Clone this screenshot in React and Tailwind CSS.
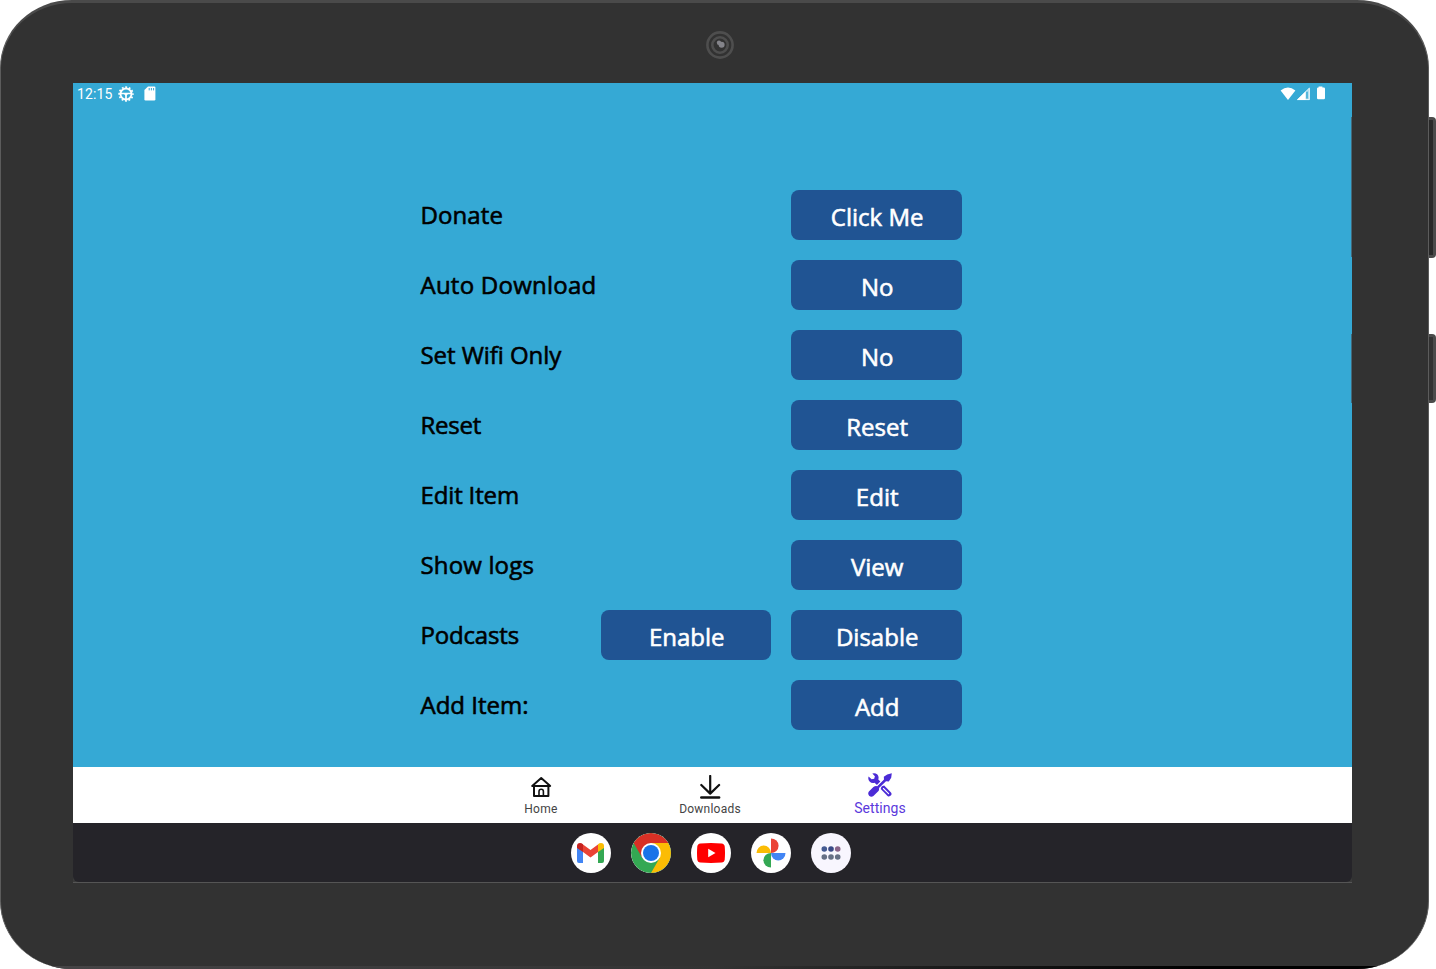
import React from "react";

const rows = [
  { label: "Donate", spacing: "tracking-[0.1px]", actions: ["Click Me"] },
  { label: "Auto Download", spacing: "tracking-[0.24px]", actions: ["No"] },
  { label: "Set Wifi Only", spacing: "tracking-[-0.06px]", actions: ["No"] },
  { label: "Reset", spacing: "tracking-[-0.25px]", actions: ["Reset"] },
  { label: "Edit Item", spacing: "tracking-[-0.15px]", actions: ["Edit"] },
  { label: "Show logs", spacing: "tracking-[0.15px]", actions: ["View"] },
  { label: "Podcasts", spacing: "tracking-[-0.17px]", actions: ["Enable", "Disable"] },
  { label: "Add Item:", spacing: "tracking-normal", actions: ["Add"] },
];

function Camera() {
  return (
    <svg className="h-7 w-7" viewBox="0 0 28 28" fill="none">
      <circle cx="14" cy="14" r="12.6" stroke="#4e4e4e" strokeWidth="2.6" />
      <circle cx="14" cy="14" r="7.7" stroke="#4e4e4e" strokeWidth="2.6" />
      <circle cx="13" cy="11.8" r="2.2" fill="#84848a" />
      <circle cx="15.6" cy="13.7" r="3" fill="#84848a" />
    </svg>
  );
}

function GearIcon() {
  return (
    <svg className="h-4 w-4" viewBox="0 0 16 16" fill="none" stroke="white">
      <circle cx="8" cy="8" r="5.5" strokeWidth="1.9" />
      <circle cx="8" cy="8" r="6.9" strokeWidth="1.6" strokeDasharray="1.9 1.713" strokeDashoffset="0.95" />
      <path d="M2.8 7.6H13.2" strokeWidth="1.5" />
      <path d="M8 7.6V13.5" strokeWidth="1.7" />
      <path d="M5.8 7.6H10.2L8.8 9.6H7.2Z" fill="white" stroke="none" />
    </svg>
  );
}

function SdIcon() {
  return (
    <svg className="h-[15px] w-3" viewBox="0 0 12 15">
      <path d="M4 0.4H10.2Q11.4 0.4 11.4 1.6V13.2Q11.4 14.4 10.2 14.4H1.6Q0.4 14.4 0.4 13.2V4Z" fill="white" />
      <path d="M5.2 2V4.4M7.4 2V4.4M9.6 2V4.4" stroke="#35a9d5" strokeWidth="1" />
    </svg>
  );
}

function StatusIcons() {
  return (
    <svg className="h-4 w-[46px]" viewBox="0 0 46 16">
      <path d="M0.6 4.5Q8 -1.5 15.4 4.5L8 14Z" fill="white" />
      <path d="M29.8 1.5V14H17Z" fill="white" fillOpacity="0.55" />
      <path d="M25.6 5.6V14H17Z" fill="white" />
      <path d="M17.6 13.6L29.3 2.2V13.6Z" fill="none" stroke="white" strokeWidth="0.8" />
      <path d="M27 5.8V12.5" stroke="#35a9d5" strokeWidth="1.4" />
      <path d="M38.6 0.6H42.4V1.6H43.8Q45 1.6 45 2.8V12Q45 13.2 43.8 13.2H38.2Q37 13.2 37 12V2.8Q37 1.6 38.2 1.6H38.6Z" fill="white" />
    </svg>
  );
}

function HomeIcon() {
  return (
    <svg className="h-6 w-6" viewBox="0 0 24 24" fill="none" stroke="#111" strokeWidth="2" strokeLinejoin="round" strokeLinecap="round">
      <path d="M3.2 10.9L12.2 3L21.2 10.9Z" />
      <path d="M5 11V21H19.4V11" />
      <path d="M10 20.4V16.4Q10 14.2 12.2 14.2Q14.4 14.2 14.4 16.4V20.4" strokeWidth="1.6" />
    </svg>
  );
}

function DownloadIcon() {
  return (
    <svg className="h-6 w-6" viewBox="0 0 24 24" fill="none" stroke="#111" strokeWidth="2.2" strokeLinejoin="round" strokeLinecap="round">
      <path d="M12.2 1V18.5M3.3 10L12.2 18.6L21.1 10" />
      <path d="M3.3 22.6H21.1" strokeWidth="2.5" />
    </svg>
  );
}

function ToolsIcon() {
  return (
    <svg className="h-6 w-6" viewBox="0 0 24 24" fill="#4b2bd6">
      <path d="M4.3 0.5Q7 -0.6 9.4 1.6Q11.2 3.6 10.3 6.4L12.4 8.6L9 12L6.6 9.7Q3.6 10.5 1.6 8.4Q-0.4 6.2 0.6 3.4L3.6 6.3L6.2 5.8L6.9 3.2Z" />
      <path d="M13.5 13.2L16.2 12.6L23 19.4Q24.2 21 22.8 22.6Q21.2 24.1 19.5 22.9L12.7 16.1Z" />
      <path d="M15.4 15.5L20.6 20.7" stroke="white" strokeWidth="1.1" strokeLinecap="round" />
      <path d="M19.2 1.4L23.8 0.2L23.2 4.8L20.8 8.4L18 8.2L11 15Q11.5 17.2 10 18.6L5.4 23.1Q3.2 24.6 1.1 22.8Q-0.6 20.7 0.9 18.6L5.4 14.1Q7.2 12.6 9.2 13.2L16 6.4L15.8 3.7Z" />
      <path d="M9.2 12.5L14.6 7.1M12.2 14.9L16.8 10.3" stroke="white" strokeWidth="0.6" />
    </svg>
  );
}

function GmailIcon() {
  return (
    <svg className="h-5 w-[27px]" viewBox="0 0 27 20">
      <path d="M0 4L6 8V20H2Q0 20 0 18Z" fill="#4285f4" />
      <path d="M27 4L21 8V20H25Q27 20 27 18Z" fill="#34a853" />
      <path d="M6 1.6L13.5 7L21 1.6V9L13.5 14.6L6 9Z" fill="#ea4335" />
      <path d="M0 5V3Q0 0 3 0Q4.6 0 6 1.2V9L0 5Z" fill="#c5221f" />
      <path d="M27 5V3Q27 0 24 0Q22.4 0 21 1.2V9L27 5Z" fill="#fbbc04" />
    </svg>
  );
}

function ChromeIcon() {
  return (
    <svg className="h-10 w-10" viewBox="0 0 40 40">
      <circle cx="20" cy="20" r="20" fill="#34a853" />
      <path d="M2.68 10A20 20 0 0 1 37.32 10H20L11.34 25Z" fill="#d93025" />
      <path d="M37.32 10A20 20 0 0 1 20 40L28.66 25L20 10Z" fill="#fbbc04" />
      <circle cx="20" cy="20" r="10" fill="white" />
      <circle cx="20" cy="20" r="8" fill="#1a73e8" />
    </svg>
  );
}

function YoutubeIcon() {
  return (
    <svg className="h-5 w-7" viewBox="0 0 28 20">
      <path d="M3.4 0.5Q14 -0.3 24.6 0.5Q27.4 0.8 27.7 3.6Q28.3 10 27.7 16.4Q27.4 19.2 24.6 19.5Q14 20.3 3.4 19.5Q0.6 19.2 0.3 16.4Q-0.3 10 0.3 3.6Q0.6 0.8 3.4 0.5Z" fill="#ff0000" />
      <path d="M11.2 5.8L18.5 10L11.2 14.2Z" fill="white" />
    </svg>
  );
}

function PhotosIcon() {
  return (
    <svg className="h-[30px] w-[30px]" viewBox="0 0 30 30">
      <path d="M15 0.5A7.6 7.25 0 0 1 15 15Z" fill="#ea4335" />
      <path d="M29.5 15A7.25 7.6 0 0 1 15 15Z" fill="#4285f4" />
      <path d="M15 29.5A7.6 7.25 0 0 1 15 15Z" fill="#34a853" />
      <path d="M0.5 15A7.25 7.6 0 0 1 15 15Z" fill="#fbbc04" />
    </svg>
  );
}

function AppsIcon() {
  return (
    <svg className="h-[14px] w-5" viewBox="0 0 20 14">
      <circle cx="3.3" cy="3" r="2.8" fill="#445a92" />
      <circle cx="10" cy="3" r="2.8" fill="#3a4a86" />
      <circle cx="16.7" cy="3" r="2.8" fill="#8a6489" />
      <circle cx="3.3" cy="11" r="2.8" fill="#667085" />
      <circle cx="10" cy="11" r="2.8" fill="#667085" />
      <circle cx="16.7" cy="11" r="2.8" fill="#667085" />
    </svg>
  );
}

function DockItem({ children, tone = "bg-white" }) {
  return (
    <div className={`flex h-10 w-10 items-center justify-center overflow-hidden rounded-full ${tone}`}>
      {children}
    </div>
  );
}

function SettingRow({ label, spacing, actions }) {
  return (
    <div className="flex h-[50px] items-center justify-between">
      <span className={`pl-[0.5px] text-[24px] leading-[50px] text-black [-webkit-text-stroke:0.6px_black] ${spacing}`}>
        {label}
      </span>
      <div className="flex gap-[20px]">
        {actions.map((a) => (
          <button
            key={a}
            className="h-[50px] w-[170.5px] rounded-[8px] bg-[#205493] pt-1 pl-[1.5px] text-center text-[24px] leading-[46px] text-white [-webkit-text-stroke:0.6px_white]"
          >
            {a}
          </button>
        ))}
      </div>
    </div>
  );
}

export default function App() {
  return (
    <div className="flex h-[969px] w-[1436px] overflow-hidden bg-white">
      <div className="flex h-[969px] w-[1429px] flex-col overflow-hidden rounded-[72px/68px] border-x border-t-[3px] border-x-[#5c5c5c] border-t-[#4a4a4a] bg-[#323232] pl-[72px]">
        <div className="flex h-20 w-[1294px] shrink-0 justify-center pt-7">
          <Camera />
        </div>

        <div className="relative flex h-[800px] w-[1279px] shrink-0 flex-col overflow-hidden border-b border-[#555] bg-[#35a9d5]">
          <div className="flex h-6 shrink-0 items-start justify-between pr-[26px] pl-1">
            <div className="flex items-start font-['Roboto',sans-serif] text-white">
              <span className="w-[41px] pt-[1px] text-[14px] leading-5 tracking-[0.1px]">12:15</span>
              <div className="pt-[3px]">
                <GearIcon />
              </div>
              <div className="pt-[3px] pl-[10px]">
                <SdIcon />
              </div>
            </div>
            <div className="pt-[3px]">
              <StatusIcons />
            </div>
          </div>

          <main className="flex h-[660px] shrink-0 flex-col gap-[20.05px] pt-[83.1px] pl-[347px] font-['Open_Sans',sans-serif]">
            {rows.map((r) => (
              <div key={r.label} className="w-[541.7px]">
                <SettingRow {...r} />
              </div>
            ))}
          </main>

          <nav className="flex h-14 shrink-0 justify-center bg-white pr-[5px] font-['Roboto',sans-serif] text-[#444]">
            <div className="flex w-[169.5px] flex-col items-center pt-2">
              <HomeIcon />
              <span className="pt-[2px] pl-[1px] text-[12px] leading-4 tracking-[0.3px]">Home</span>
            </div>
            <div className="flex w-[169.5px] flex-col items-center pt-2">
              <DownloadIcon />
              <span className="pt-[2px] text-[12px] leading-4 tracking-[0.22px]">Downloads</span>
            </div>
            <div className="flex w-[169.5px] flex-col items-center pt-[6px] text-[#5b39dc]">
              <ToolsIcon />
              <span className="pt-[3px] pl-[1px] text-[14px] leading-4 tracking-[0.05px]">Settings</span>
            </div>
          </nav>

          <div className="flex grow bg-[#3a3a3a]">
            <div className="flex grow items-start justify-center gap-5 rounded-b-[6px] bg-[#252429] pt-[10px] pr-1">
              <DockItem>
                <GmailIcon />
              </DockItem>
              <DockItem>
                <ChromeIcon />
              </DockItem>
              <DockItem>
                <YoutubeIcon />
              </DockItem>
              <DockItem>
                <PhotosIcon />
              </DockItem>
              <DockItem tone="bg-[#f8f6fe]">
                <AppsIcon />
              </DockItem>
            </div>
          </div>

          <div className="absolute top-[34px] right-0 h-[140px] w-px bg-[#44697a]" />
          <div className="absolute top-[251px] right-0 h-[69px] w-px bg-[#44697a]" />
        </div>

        <div className="mt-auto -ml-[72px] h-[3px] bg-[linear-gradient(to_right,#484648_0%,#333_50%,#000_84%)]" />
      </div>

      <div className="flex w-[7px] flex-col pt-[117px]">
        <div className="h-[141px] rounded-r-[4px] border-y-[3px] border-r-[3px] border-[#4b4b4b] bg-[#292929]" />
        <div className="mt-[76px] h-[69px] rounded-r-[4px] border-y-[3px] border-r-[3px] border-[#4b4b4b] bg-[#323232]" />
      </div>
    </div>
  );
}
